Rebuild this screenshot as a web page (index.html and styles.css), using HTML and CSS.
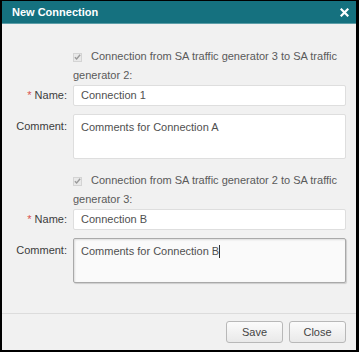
FILE: index.html
```html
<!DOCTYPE html>
<html lang="en">

<head>
    <meta charset="UTF-8">
    <meta name="viewport" content="width=device-width, initial-scale=1.0">
    <title>New Connection</title>
    <link rel="stylesheet" href="styles.css">
</head>

<body>
    <div class="dialog">
        <div class="dialog-header">
            <span class="dialog-title">New Connection</span>
            <svg class="close-icon" width="9" height="9" viewBox="0 0 9 9">
                <path d="M1.5 1.5 L7.5 7.5 M7.5 1.5 L1.5 7.5" stroke="#fff" stroke-width="2.2" stroke-linecap="square" />
            </svg>
        </div>

        <div class="dialog-body">
            <!-- connection A -->
            <div class="row check-row">
                <div class="label"></div>
                <div class="field check-text">
                    <span class="check-box">
                        <svg width="8" height="8" viewBox="0 0 8 8">
                            <path d="M1 4.2 L3 6.2 L7 1.5" fill="none" stroke="#9a9a9a" stroke-width="1.6" />
                        </svg>
                    </span>Connection from SA traffic generator 3 to SA traffic generator 2:
                </div>
            </div>
            <div class="row name-row">
                <div class="label"><span class="required">*</span> Name:</div>
                <div class="field input">Connection 1</div>
            </div>
            <div class="row comment-row">
                <div class="label">Comment:</div>
                <div class="field textarea">Comments for Connection A</div>
            </div>

            <!-- connection B -->
            <div class="row check-row second">
                <div class="label"></div>
                <div class="field check-text">
                    <span class="check-box">
                        <svg width="8" height="8" viewBox="0 0 8 8">
                            <path d="M1 4.2 L3 6.2 L7 1.5" fill="none" stroke="#9a9a9a" stroke-width="1.6" />
                        </svg>
                    </span>Connection from SA traffic generator 2 to SA traffic generator 3:
                </div>
            </div>
            <div class="row name-row">
                <div class="label"><span class="required">*</span> Name:</div>
                <div class="field input">Connection B</div>
            </div>
            <div class="row comment-row">
                <div class="label">Comment:</div>
                <div class="field textarea focused">Comments for Connection B<span class="caret"></span></div>
            </div>
        </div>

        <div class="dialog-footer">
            <button class="btn">Save</button>
            <button class="btn">Close</button>
        </div>
    </div>
</body>

</html>
```

FILE: styles.css
```css
html,
body {
    margin: 0;
    height: 100%;
    background-color: #000;
}

body {
    font-family: "Liberation Sans", Arial, sans-serif;
    font-size: 11px;
    color: #3c3c3c;
}

.dialog {
    margin: 1px 3px 0 2px;
    height: 349px;
    display: flex;
    flex-direction: column;
    background-color: #f1f1f1;
}

.dialog-header {
    height: 22px;
    background-color: #15717f;
    border-bottom: 1px solid #5c9ea8;
    display: flex;
    align-items: center;
    justify-content: space-between;
    padding: 0 7px 0 10px;
}

.dialog-title {
    color: #fff;
    font-weight: bold;
    font-size: 11px;
}

.close-icon {
    display: block;
}

.dialog-body {
    flex: 1;
    padding: 23px 10px 0 10px;
}

.row {
    display: flex;
    gap: 6px;
}

.label {
    width: 55px;
    flex: none;
    text-align: right;
    color: #3c3c3c;
}

.field {
    flex: 1;
    min-width: 0;
    box-sizing: border-box;
}

.check-text {
    line-height: 19px;
    color: #5a5a5a;
}

.check-row.second {
    margin-top: 12px;
}

.check-box {
    display: inline-flex;
    align-items: center;
    justify-content: center;
    width: 9px;
    height: 9px;
    box-sizing: border-box;
    border: 1px solid #d4d4d4;
    background-color: #e9e9e9;
    margin-right: 9px;
    vertical-align: -1px;
}

.name-row .label {
    line-height: 21px;
}

.required {
    color: #d9534f;
}

.input {
    height: 21px;
    line-height: 19px;
    background-color: #fff;
    border: 1px solid #dedede;
    border-radius: 2px;
    padding: 0 7px;
    color: #505050;
}

.comment-row {
    margin-top: 8px;
}

.comment-row .label {
    padding-top: 5px;
    line-height: 15px;
}

.textarea {
    height: 45px;
    background-color: #fff;
    border: 1px solid #dedede;
    border-radius: 2px;
    padding: 5px 7px;
    line-height: 15px;
    color: #505050;
}

.textarea.focused {
    background-color: #fafafa;
    border-color: #a9a9a9;
    box-shadow: inset 1px 1px 2px rgba(0, 0, 0, 0.12), 1px 1px 1px rgba(0, 0, 0, 0.15);
}

.caret {
    display: inline-block;
    width: 1px;
    height: 13px;
    background-color: #333;
    vertical-align: -3px;
}

.dialog-footer {
    height: 36px;
    border-top: 1px solid #dcdcdc;
    display: flex;
    justify-content: flex-end;
    align-items: center;
    gap: 6px;
    padding: 0 10px;
}

.btn {
    width: 57px;
    height: 22px;
    font-family: "Liberation Sans", Arial, sans-serif;
    font-size: 11px;
    color: #444;
    background: linear-gradient(#fbfbfb, #e9e9e9);
    border: 1px solid #b8b8b8;
    border-radius: 3px;
    padding: 0;
    cursor: pointer;
}
```
